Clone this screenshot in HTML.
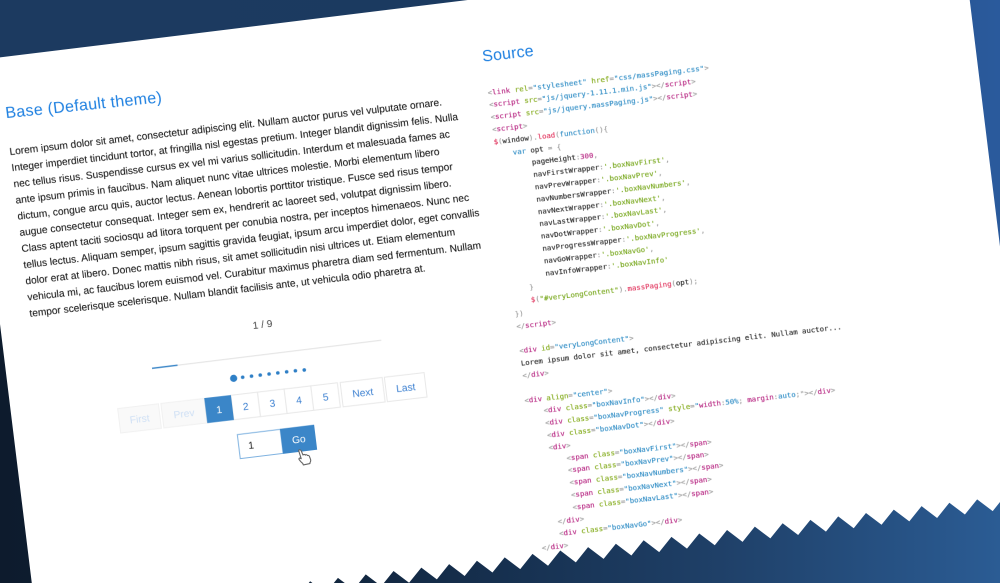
<!DOCTYPE html>
<html><head><meta charset="utf-8"><title>Mass Paging</title>
<style>
html,body{margin:0;padding:0;width:1000px;height:583px;overflow:hidden;background:#fff}
svg{display:block}
.b{font-family:"Liberation Sans",Arial,sans-serif;font-size:10.15px;fill:#111;stroke:#111;stroke-width:.06px}
.h{font-family:"Liberation Sans",Arial,sans-serif;font-size:16px;fill:#1f7fe0}
.btn{font-family:"Liberation Sans",Arial,sans-serif;font-size:10.2px;text-anchor:middle;fill:#3a7fd0}
.dis{fill:#cfe0f5}
.c text{font-family:"DejaVu Sans Mono","Liberation Mono",monospace;font-size:7.35px;fill:#222;stroke:#222;stroke-width:.12px}
.t{fill:#999;stroke:#999}.n{fill:#b5217f;stroke:#b5217f}.a{fill:#7fa814;stroke:#7fa814}.s{fill:#2a8ac4;stroke:#2a8ac4}.g{fill:#74a516;stroke:#74a516}.f{fill:#e0305a;stroke:#e0305a}
</style></head><body>
<svg width="1000" height="583" viewBox="0 0 1000 583" xmlns="http://www.w3.org/2000/svg">
<defs>
<linearGradient id="top" x1="0" x2="1000" y1="0" y2="0" gradientUnits="userSpaceOnUse">
<stop offset="0" stop-color="#1c3a60"/><stop offset=".45" stop-color="#1b3a60"/><stop offset="1" stop-color="#2a5a9c"/></linearGradient>
<linearGradient id="bot" x1="0" x2="1000" y1="0" y2="0" gradientUnits="userSpaceOnUse">
<stop offset="0" stop-color="#0d1b2d"/><stop offset=".25" stop-color="#0f2035"/><stop offset=".5" stop-color="#16304f"/><stop offset=".72" stop-color="#1f4068"/><stop offset="1" stop-color="#2b5c94"/></linearGradient>
<filter id="bl" x="-5%" y="-5%" width="110%" height="110%"><feGaussianBlur stdDeviation="0.22"/></filter>
</defs>
<rect width="1000" height="583" fill="url(#bot)"/>
<rect width="1000" height="110" fill="url(#top)"/>
<rect x="975" y="100" width="25" height="160" fill="#2a5a9c"/>
<g transform="rotate(-7)">
<path fill="#fff" d="M-39.5 57H962.5V614.7L951 628.3l-14 -13.6 -14 13.6 -14 -13.6 -14 13.6 -14 -13.6 -14 13.6 -14 -13.6 -14 13.6 -14 -13.6 -14 13.6 -14 -13.6 -14 13.6 -14 -13.6 -14 13.6 -14 -13.6 -14 13.6 -14 -13.6 -14 13.6 -14 -13.6 -14 13.6 -14 -13.6 -14 13.6 -14 -13.6 -14 13.6 -14 -13.6 -14 13.6 -14 -13.6 -14 13.6 -14 -13.6 -14 13.6 -14 -13.6 -14 13.6 -14 -13.6 -14 13.6 -14 -13.6 -14 13.6 -14 -13.6 -14 13.6 -14 -13.6 -14 13.6 -14 -13.6 -14 13.6 -14 -13.6 -14 13.6 -14 -13.6 -14 13.6 -14 -13.6 -14 13.6 -14 -13.6 -14 13.6 -14 -13.6 -14 13.6 -14 -13.6 -14 13.6 -14 -13.6 -14 13.6 -14 -13.6 -14 13.6 -14 -13.6 -14 13.6 -14 -13.6 -14 13.6 -14 -13.6 -14 13.6 -14 -13.6 -14 13.6 -14 -13.6 -14 13.6 -14 -13.6 -14 13.6 -14 -13.6 -14 13.6 -14 -13.6 -14 13.6 -14 -13.6 -14 13.6V800H-39.5Z"/>
<g filter="url(#bl)">
<text class="h" transform="translate(-8.4,0) skewY(1.2) translate(8.4,0)" x="-8.4" y="118" textLength="157">Base (Default theme)</text>
<text class="h" transform="translate(471.8,0) skewY(0.5) translate(-471.8,0)" x="471.8" y="120" textLength="51.5">Source</text>
<g transform="translate(-9,0) skewY(0.45) translate(9,0)">
<text class="b" x="-9" y="155.1">Lorem ipsum dolor sit amet, consectetur adipiscing elit. Nullam auctor purus vel vulputate ornare.</text>
<text class="b" x="-9" y="171.4">Integer imperdiet tincidunt tortor, at fringilla nisl egestas pretium. Integer blandit dignissim felis. Nulla</text>
<text class="b" x="-9" y="187.7">nec tellus risus. Suspendisse cursus ex vel mi varius sollicitudin. Interdum et malesuada fames ac</text>
<text class="b" x="-9" y="204">ante ipsum primis in faucibus. Nam aliquet nunc vitae ultrices molestie. Morbi elementum libero</text>
<text class="b" x="-9" y="220.3">dictum, congue arcu quis, auctor lectus. Aenean lobortis porttitor tristique. Fusce sed risus tempor</text>
<text class="b" x="-9" y="236.6">augue consectetur consequat. Integer sem ex, hendrerit ac laoreet sed, volutpat dignissim libero.</text>
<text class="b" x="-9" y="252.9">Class aptent taciti sociosqu ad litora torquent per conubia nostra, per inceptos himenaeos. Nunc nec</text>
<text class="b" x="-9" y="269.2">tellus lectus. Aliquam semper, ipsum sagittis gravida feugiat, ipsum arcu imperdiet dolor, eget convallis</text>
<text class="b" x="-9" y="285.5">dolor erat at libero. Donec mattis nibh risus, sit amet sollicitudin nisi ultrices ut. Etiam elementum</text>
<text class="b" x="-9" y="301.8">vehicula mi, ac faucibus lorem euismod vel. Curabitur maximus pharetra diam sed fermentum. Nullam</text>
<text class="b" x="-9" y="318.1">tempor scelerisque scelerisque. Nullam blandit facilisis ante, ut vehicula odio pharetra at.</text>
</g>

<text class="b" x="221" y="357.6" text-anchor="middle" style="fill:#444;stroke:none">1 / 9</text>
<rect x="106" y="383.6" width="231" height="1.1" fill="#e4e4e4"/>
<rect x="106" y="383.4" width="25.7" height="1.4" fill="#3a86c8"/>
<g fill="#2f7fc6">
<circle cx="185.8" cy="404" r="3.6"/>
<circle cx="194.9" cy="404" r="1.8"/><circle cx="203.8" cy="404" r="1.8"/><circle cx="212.6" cy="404" r="1.8"/><circle cx="221.5" cy="404" r="1.8"/><circle cx="230.3" cy="404" r="1.8"/><circle cx="239.2" cy="404" r="1.8"/><circle cx="248" cy="404" r="1.8"/><circle cx="256.9" cy="404.3" r="1.8"/>
</g>

<g transform="translate(221,0) skewY(0.3) translate(-221,0)">
<g stroke="#f1f1f1" stroke-width="1" fill="#f9f9f9">
<rect x="67" y="420.7" width="41" height="24.6"/>
<rect x="110.5" y="420.7" width="43.5" height="24.6"/>
</g>
<g stroke="#e8e8e8" stroke-width="1" fill="#fff">
<rect x="181" y="420.7" width="26.8" height="24.6"/>
<rect x="207.8" y="420.7" width="26.8" height="24.6"/>
<rect x="234.6" y="420.7" width="26.8" height="24.6"/>
<rect x="261.4" y="420.7" width="26.8" height="24.6"/>
<rect x="291" y="420.7" width="42.3" height="24.6"/>
<rect x="335.5" y="420.7" width="40" height="24.6"/>
</g>
<rect x="154.2" y="420.4" width="26.8" height="25.2" fill="#3a86c8"/>
<text class="btn dis" x="87.5" y="437">First</text>
<text class="btn dis" x="132.2" y="437">Prev</text>
<text class="btn" x="167.6" y="437" style="fill:#fff">1</text>
<text class="btn" x="194.4" y="437">2</text>
<text class="btn" x="221.2" y="437">3</text>
<text class="btn" x="248" y="437">4</text>
<text class="btn" x="274.8" y="437">5</text>
<text class="btn" x="312.2" y="437">Next</text>
<text class="btn" x="355.5" y="437">Last</text>
</g>

<rect x="182.6" y="460.3" width="43.2" height="24.2" fill="#fff" stroke="#7fb2e0" stroke-width="1"/>
<rect x="225.6" y="459.8" width="34.4" height="25.2" fill="#3a86c8"/>
<text class="btn" x="194.9" y="476" style="fill:#222">1</text>
<text class="btn" x="243" y="476" style="fill:#fff">Go</text>

<g class="c" transform="translate(472.7,0) skewY(0.5) translate(-472.7,0)">
<text x="472.7" y="153.8" letter-spacing="0.12"><tspan class="t">&lt;</tspan><tspan class="n">link</tspan> <tspan class="a">rel</tspan><tspan class="t">=</tspan><tspan class="s">"stylesheet"</tspan> <tspan class="a">href</tspan><tspan class="t">=</tspan><tspan class="s">"css/massPaging.css"</tspan><tspan class="t">&gt;</tspan></text>
<text x="472.7" y="166.2"><tspan class="t">&lt;</tspan><tspan class="n">script</tspan> <tspan class="a">src</tspan><tspan class="t">=</tspan><tspan class="s">"js/jquery-1.11.1.min.js"</tspan><tspan class="t">&gt;&lt;/</tspan><tspan class="n">script</tspan><tspan class="t">&gt;</tspan></text>
<text x="472.7" y="178.6"><tspan class="t">&lt;</tspan><tspan class="n">script</tspan> <tspan class="a">src</tspan><tspan class="t">=</tspan><tspan class="s">"js/jquery.massPaging.js"</tspan><tspan class="t">&gt;&lt;/</tspan><tspan class="n">script</tspan><tspan class="t">&gt;</tspan></text>
<text x="472.7" y="191"><tspan class="t">&lt;</tspan><tspan class="n">script</tspan><tspan class="t">&gt;</tspan></text>
<text x="472.7" y="203.4"><tspan class="f">$</tspan><tspan class="t">(</tspan>window<tspan class="t">).</tspan><tspan class="f">load</tspan><tspan class="t">(</tspan><tspan class="s">function</tspan><tspan class="t">(){</tspan></text>
<text x="490.4" y="215.8"><tspan class="s">var</tspan> opt <tspan class="t">= {</tspan></text>
<text x="508.1" y="228.2">pageHeight<tspan class="t">:</tspan><tspan class="n">300</tspan><tspan class="t">,</tspan></text>
<text x="508.1" y="240.6">navFirstWrapper<tspan class="t">:</tspan><tspan class="g">'.boxNavFirst'</tspan><tspan class="t">,</tspan></text>
<text x="508.1" y="253">navPrevWrapper<tspan class="t">:</tspan><tspan class="g">'.boxNavPrev'</tspan><tspan class="t">,</tspan></text>
<text x="508.1" y="265.4">navNumbersWrapper<tspan class="t">:</tspan><tspan class="g">'.boxNavNumbers'</tspan><tspan class="t">,</tspan></text>
<text x="508.1" y="277.8">navNextWrapper<tspan class="t">:</tspan><tspan class="g">'.boxNavNext'</tspan><tspan class="t">,</tspan></text>
<text x="508.1" y="290.2">navLastWrapper<tspan class="t">:</tspan><tspan class="g">'.boxNavLast'</tspan><tspan class="t">,</tspan></text>
<text x="508.1" y="302.6">navDotWrapper<tspan class="t">:</tspan><tspan class="g">'.boxNavDot'</tspan><tspan class="t">,</tspan></text>
<text x="508.1" y="315">navProgressWrapper<tspan class="t">:</tspan><tspan class="g">'.boxNavProgress'</tspan><tspan class="t">,</tspan></text>
<text x="508.1" y="327.4">navGoWrapper<tspan class="t">:</tspan><tspan class="g">'.boxNavGo'</tspan><tspan class="t">,</tspan></text>
<text x="508.1" y="339.8">navInfoWrapper<tspan class="t">:</tspan><tspan class="g">'.boxNavInfo'</tspan></text>
<text x="490.4" y="352.2"><tspan class="t">}</tspan></text>
<text x="490.4" y="364.6"><tspan class="f">$</tspan><tspan class="t">(</tspan><tspan class="g">"#veryLongContent"</tspan><tspan class="t">).</tspan><tspan class="f">massPaging</tspan><tspan class="t">(</tspan>opt<tspan class="t">);</tspan></text>
<text x="472.7" y="377"><tspan class="t">})</tspan></text>
<text x="472.7" y="389.4"><tspan class="t">&lt;/</tspan><tspan class="n">script</tspan><tspan class="t">&gt;</tspan></text>
<text x="472.7" y="414.2"><tspan class="t">&lt;</tspan><tspan class="n">div</tspan> <tspan class="a">id</tspan><tspan class="t">=</tspan><tspan class="s">"veryLongContent"</tspan><tspan class="t">&gt;</tspan></text>
<text x="472.7" y="426.6">Lorem ipsum dolor sit amet, consectetur adipiscing elit. Nullam auctor...</text>
<text x="472.7" y="439"><tspan class="t">&lt;/</tspan><tspan class="n">div</tspan><tspan class="t">&gt;</tspan></text>
<text x="471.7" y="463.8"><tspan class="t">&lt;</tspan><tspan class="n">div</tspan> <tspan class="a">align</tspan><tspan class="t">=</tspan><tspan class="s">"center"</tspan><tspan class="t">&gt;</tspan></text>
<text x="489.6" y="476.2"><tspan class="t">&lt;</tspan><tspan class="n">div</tspan> <tspan class="a">class</tspan><tspan class="t">=</tspan><tspan class="s">"boxNavInfo"</tspan><tspan class="t">&gt;&lt;/</tspan><tspan class="n">div</tspan><tspan class="t">&gt;</tspan></text>
<text x="489.6" y="488.6"><tspan class="t">&lt;</tspan><tspan class="n">div</tspan> <tspan class="a">class</tspan><tspan class="t">=</tspan><tspan class="s">"boxNavProgress"</tspan> <tspan class="a">style</tspan><tspan class="t">=</tspan><tspan class="s">"</tspan><tspan class="n">width</tspan><tspan class="t">:</tspan><tspan class="s">50%</tspan><tspan class="t">;</tspan> <tspan class="n">margin</tspan><tspan class="t">:</tspan><tspan class="s">auto</tspan><tspan class="t">;"&gt;&lt;/</tspan><tspan class="n">div</tspan><tspan class="t">&gt;</tspan></text>
<text x="490" y="501"><tspan class="t">&lt;</tspan><tspan class="n">div</tspan> <tspan class="a">class</tspan><tspan class="t">=</tspan><tspan class="s">"boxNavDot"</tspan><tspan class="t">&gt;&lt;/</tspan><tspan class="n">div</tspan><tspan class="t">&gt;</tspan></text>
<text x="490" y="513.4"><tspan class="t">&lt;</tspan><tspan class="n">div</tspan><tspan class="t">&gt;</tspan></text>
<text x="506.5" y="525.8"><tspan class="t">&lt;</tspan><tspan class="n">span</tspan> <tspan class="a">class</tspan><tspan class="t">=</tspan><tspan class="s">"boxNavFirst"</tspan><tspan class="t">&gt;&lt;/</tspan><tspan class="n">span</tspan><tspan class="t">&gt;</tspan></text>
<text x="506.5" y="538.2"><tspan class="t">&lt;</tspan><tspan class="n">span</tspan> <tspan class="a">class</tspan><tspan class="t">=</tspan><tspan class="s">"boxNavPrev"</tspan><tspan class="t">&gt;&lt;/</tspan><tspan class="n">span</tspan><tspan class="t">&gt;</tspan></text>
<text x="506.5" y="550.6"><tspan class="t">&lt;</tspan><tspan class="n">span</tspan> <tspan class="a">class</tspan><tspan class="t">=</tspan><tspan class="s">"boxNavNumbers"</tspan><tspan class="t">&gt;&lt;/</tspan><tspan class="n">span</tspan><tspan class="t">&gt;</tspan></text>
<text x="506.5" y="563"><tspan class="t">&lt;</tspan><tspan class="n">span</tspan> <tspan class="a">class</tspan><tspan class="t">=</tspan><tspan class="s">"boxNavNext"</tspan><tspan class="t">&gt;&lt;/</tspan><tspan class="n">span</tspan><tspan class="t">&gt;</tspan></text>
<text x="506.5" y="575.4"><tspan class="t">&lt;</tspan><tspan class="n">span</tspan> <tspan class="a">class</tspan><tspan class="t">=</tspan><tspan class="s">"boxNavLast"</tspan><tspan class="t">&gt;&lt;/</tspan><tspan class="n">span</tspan><tspan class="t">&gt;</tspan></text>
<text x="490" y="587.8"><tspan class="t">&lt;/</tspan><tspan class="n">div</tspan><tspan class="t">&gt;</tspan></text>
<text x="490" y="600.2"><tspan class="t">&lt;</tspan><tspan class="n">div</tspan> <tspan class="a">class</tspan><tspan class="t">=</tspan><tspan class="s">"boxNavGo"</tspan><tspan class="t">&gt;&lt;/</tspan><tspan class="n">div</tspan><tspan class="t">&gt;</tspan></text>
<text x="471" y="612.6"><tspan class="t">&lt;/</tspan><tspan class="n">div</tspan><tspan class="t">&gt;</tspan></text>
</g>
</g>
</g>
<path transform="translate(-1,0)" d="M299.6 450.4c.8-.9 2.1-.6 2.6.4l1.8 4.2c.5-.8 1.8-.8 2.3.1.5-.6 1.8-.5 2.2.4.7-.3 1.6 0 1.9.8l1.2 3.3c.3 1.1 0 2-.5 2.8l-.2 1.2-6.6 1.3-.5-1.4c-1.3-.9-2.7-2.6-3.6-3.8-.6-1-.1-1.7.8-1.6l1.2.6z" fill="#fff" stroke="#666" stroke-width="1.1" stroke-linejoin="round"/>
</svg>
</body></html>
